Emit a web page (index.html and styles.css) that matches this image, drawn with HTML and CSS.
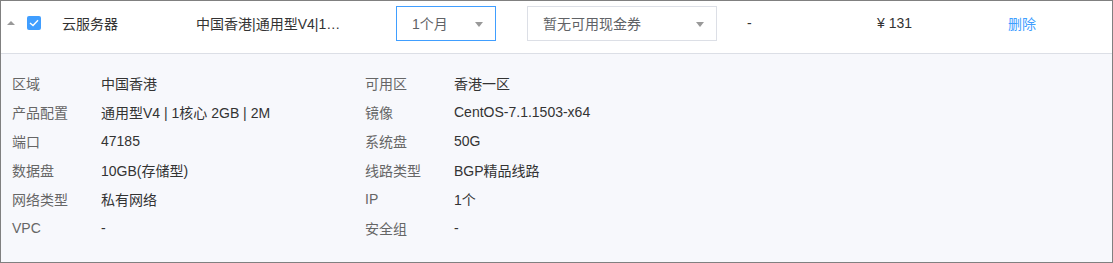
FILE: index.html
```html
<!DOCTYPE html>
<html lang="zh-CN">
<head>
    <meta charset="UTF-8">
    <meta name="viewport" content="width=device-width, initial-scale=1.0">
    <title>云服务器订单</title>
    <link rel="stylesheet" href="styles.css">
</head>
<body>
    <div class="order">
        <div class="order-row">
            <span class="toggle"></span>
            <span class="checkbox">
                <svg width="10" height="8" viewBox="0 0 10 8"><path d="M1 4 L4 6.5 L9 1.2" fill="none" stroke="#fff" stroke-width="1.4"/></svg>
            </span>
            <span class="cell-name">云服务器</span>
            <span class="cell-config">中国香港|通用型V4|1核心 2GB | 2M</span>
            <div class="select active">
                <span>1个月</span>
                <i class="caret"></i>
            </div>
            <div class="select coupon">
                <span>暂无可用现金券</span>
                <i class="caret"></i>
            </div>
            <span class="cell-discount">-</span>
            <span class="cell-price">¥ 131</span>
            <a href="#" class="cell-action">删除</a>
        </div>
        <div class="detail">
            <div class="detail-item"><span class="label">区域</span><span class="value">中国香港</span></div>
            <div class="detail-item"><span class="label">可用区</span><span class="value">香港一区</span></div>
            <div class="detail-item"><span class="label">产品配置</span><span class="value">通用型V4 | 1核心 2GB | 2M</span></div>
            <div class="detail-item"><span class="label">镜像</span><span class="value">CentOS-7.1.1503-x64</span></div>
            <div class="detail-item"><span class="label">端口</span><span class="value">47185</span></div>
            <div class="detail-item"><span class="label">系统盘</span><span class="value">50G</span></div>
            <div class="detail-item"><span class="label">数据盘</span><span class="value">10GB(存储型)</span></div>
            <div class="detail-item"><span class="label">线路类型</span><span class="value">BGP精品线路</span></div>
            <div class="detail-item"><span class="label">网络类型</span><span class="value">私有网络</span></div>
            <div class="detail-item"><span class="label">IP</span><span class="value">1个</span></div>
            <div class="detail-item"><span class="label">VPC</span><span class="value">-</span></div>
            <div class="detail-item"><span class="label">安全组</span><span class="value">-</span></div>
        </div>
    </div>
</body>
</html>
```

FILE: styles.css
```css
body, html {
    margin: 0;
    padding: 0;
    font-family: "Liberation Sans", Arial, "Noto Sans CJK SC", sans-serif;
    font-size: 14px;
    color: #333;
    background-color: #fff;
}
.order {
    width: 1113px;
    height: 263px;
    box-sizing: border-box;
    border: 1px solid #808080;
    display: flex;
    flex-direction: column;
}
.order-row {
    display: flex;
    align-items: center;
    box-sizing: border-box;
    height: 53px;
    padding-bottom: 8px;
    border-bottom: 1px solid #dcdfe6;
    background-color: #fff;
}
.toggle {
    width: 0;
    height: 0;
    margin-left: 6px;
    margin-top: -1px;
    border-left: 4px solid transparent;
    border-right: 4px solid transparent;
    border-bottom: 4px solid #999;
}
.checkbox {
    width: 14px;
    height: 14px;
    margin-left: 12px;
    border-radius: 2px;
    background-color: #409eff;
    display: flex;
    justify-content: center;
    align-items: center;
}
.cell-name {
    margin-left: 21px;
    width: 134px;
}
.cell-config {
    width: 146px;
    white-space: nowrap;
    overflow: hidden;
    text-overflow: ellipsis;
}
.select {
    box-sizing: border-box;
    height: 35px;
    border: 1px solid #dcdfe6;
    display: flex;
    align-items: center;
    justify-content: space-between;
    padding: 0 12px 0 15px;
    background-color: #fff;
    color: #606266;
}
.select.active {
    margin-left: 54px;
    width: 100px;
    border-color: #409eff;
}
.select.coupon {
    margin-left: 31px;
    width: 190px;
}
.caret {
    width: 0;
    height: 0;
    margin-top: 3px;
    border-left: 4px solid transparent;
    border-right: 4px solid transparent;
    border-top: 5px solid #999;
}
.cell-discount {
    margin-left: 30px;
    width: 130px;
}
.cell-price {
    width: 131px;
}
.cell-action {
    color: #409eff;
    text-decoration: none;
}
.detail {
    flex: 1;
    background-color: #f7f8fc;
    padding: 14px 0 0 11px;
    display: grid;
    grid-template-columns: 353px 353px;
    grid-auto-rows: 29px;
    align-content: start;
}
.detail-item {
    display: flex;
    align-items: center;
}
.label {
    width: 89px;
    color: #666;
}
.value {
    color: #333;
}
```
